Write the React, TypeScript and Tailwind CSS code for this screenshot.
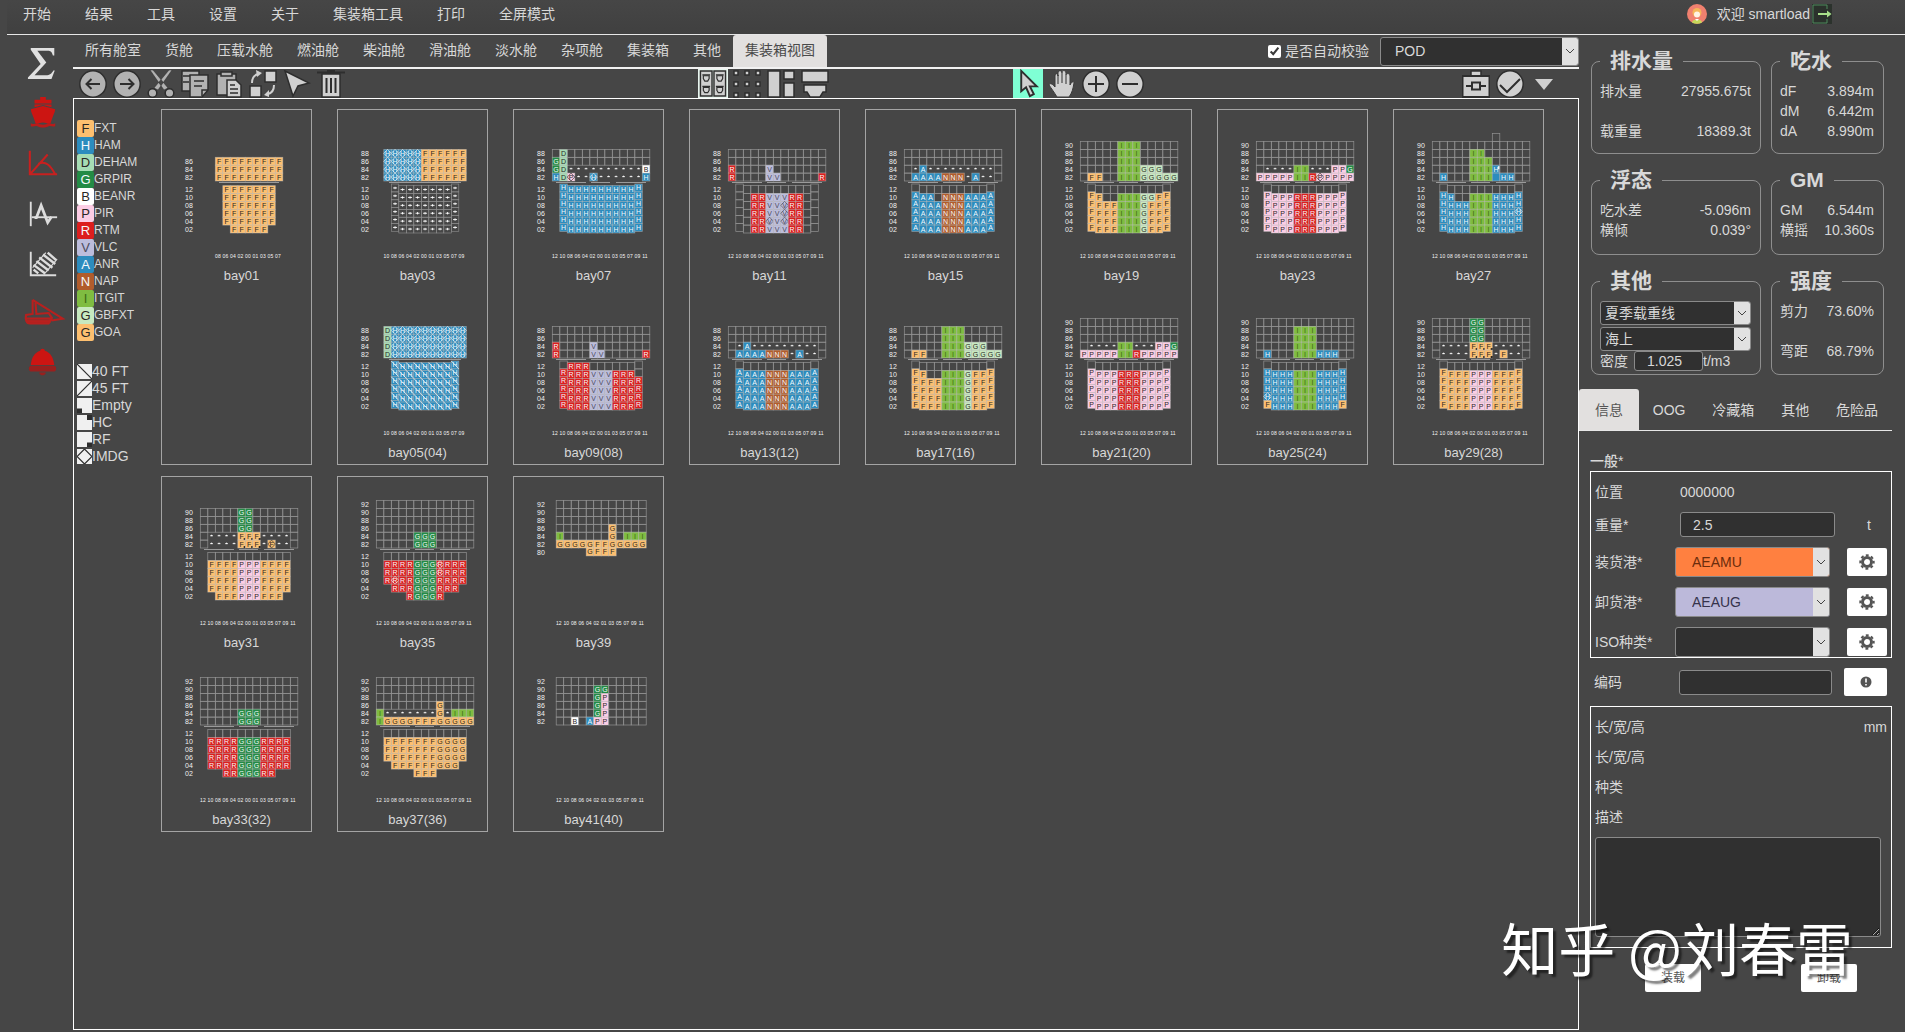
import { useState } from 'react'
import type { ReactNode } from 'react'
import clsx from 'clsx'

type Tone = { bg: string; fg: string; letter: string }

const DARK = '#2a2724'
const LIGHT = '#f4f8fb'

const TONES: Record<string, Tone> = {
  F: { bg: '#fdbf6f', fg: DARK, letter: 'F' },
  O: { bg: '#fdbf6f', fg: DARK, letter: 'G' },
  H: { bg: '#2c8cbe', fg: LIGHT, letter: 'H' },
  A: { bg: '#2c8cbe', fg: LIGHT, letter: 'A' },
  D: { bg: '#a6dcb4', fg: DARK, letter: 'D' },
  G: { bg: '#238b45', fg: LIGHT, letter: 'G' },
  B: { bg: '#ffffff', fg: DARK, letter: 'B' },
  P: { bg: '#fccde5', fg: DARK, letter: 'P' },
  R: { bg: '#dc1e1e', fg: LIGHT, letter: 'R' },
  V: { bg: '#bcbddc', fg: '#4c4c5c', letter: 'V' },
  N: { bg: '#b15c2c', fg: LIGHT, letter: 'N' },
  I: { bg: '#7fbc41', fg: '#3c6a14', letter: 'I' },
  L: { bg: '#c7e9c0', fg: DARK, letter: 'G' },
}

const PORTS = [
  ['F', 'FXT'],
  ['H', 'HAM'],
  ['D', 'DEHAM'],
  ['G', 'GRPIR'],
  ['B', 'BEANR'],
  ['P', 'PIR'],
  ['R', 'RTM'],
  ['V', 'VLC'],
  ['A', 'ANR'],
  ['N', 'NAP'],
  ['I', 'ITGIT'],
  ['L', 'GBFXT'],
  ['O', 'GOA'],
]

// One character per slot. Capital: port, lower case: dangerous goods,
// K: 40 ft, Q: reefer, E: high cube, X: plain block, +/-: taken by a 40 ft
// box of the next bay, .: free slot, space: no slot.
type BayPlan = {
  name: string
  deck: string[]
  hold?: string[]
  wings?: [number, number]
  from?: number
  to?: number
  short?: boolean
  below?: number
}

const E13 = '.............'
const E12 = '............'
const HOLD_TOP = ' ........... '

const times = (n: number, row: string) => Array<string>(n).fill(row)

const CARDS: BayPlan[][] = [
  [
    {
      name: 'bay01',
      deck: times(3, '  FFFFFFFFF  '),
      hold: [...times(5, '   FFFFFFF   '), '    FFFFF    '],
      from: 2,
      to: 10,
    },
  ],
  [
    { name: 'bay03', deck: times(4, ' hhhhhFFFFFF '), hold: times(6, '  +++++++++  '), wings: [2, 10], from: 1, to: 11 },
    { name: 'bay05(04)', deck: times(4, ' Dhhhhhhhhhh '), hold: times(6, '  KKKKKKKKK  '), wings: [2, 10], from: 1, to: 11 },
  ],
  [
    {
      name: 'bay07',
      deck: ['.D...........', 'GD...........', 'GD----------B', 'HDp--h------H'],
      hold: times(6, ' HHHHHHHHHHH '),
      wings: [1, 11],
    },
    {
      name: 'bay09(08)',
      deck: [E13, E13, 'R....V.......', 'R....VV.....R'],
      hold: [' .RRR....... ', ' RRRRVVVRRR. ', ...times(4, ' RRRRVVVRRRR ')],
      wings: [1, 11],
    },
  ],
  [
    {
      name: 'bay11',
      deck: [E13, E13, 'R....V.......', 'R....VV.....R'],
      hold: [HOLD_TOP, ' ..RRVVVRR.. ', ' ..RRVVvRR.. ', ' ..RRVVvRR.. ', ' ..RRvVvRR.. ', ' ..RRVVVRR.. '],
      wings: [1, 11],
    },
    {
      name: 'bay13(12)',
      deck: [E13, E13, '.-A---------.', '.AAAANNN-A--.'],
      hold: [HOLD_TOP, ...times(5, ' AAAANNNAAAA ')],
      wings: [1, 11],
    },
  ],
  [
    {
      name: 'bay15',
      deck: [E13, E13, '.-A---------.', '.AAAANNN-A--.'],
      hold: [HOLD_TOP, ' AAA.NNNAAAA ', ...times(4, ' AAAANNNAAAA ')],
      wings: [1, 11],
    },
    {
      name: 'bay17(16)',
      deck: ['.....III.....', '.....III.....', '.....IIILLL..', '.FF..IIILLLLL'],
      hold: [HOLD_TOP, ' FF..IIILFFF ', ...times(4, ' FFFFIIILFFF ')],
      wings: [1, 11],
    },
  ],
  [
    {
      name: 'bay19',
      deck: [...times(3, '.....III.....'), '.....IIILLL..', '.FF..IIILLLLL'],
      hold: [HOLD_TOP, ' FF..IIILLFF ', ...times(4, ' FFFFIIILFFF ')],
      wings: [1, 11],
    },
    {
      name: 'bay21(20)',
      deck: [E13, E13, E13, '.----II---PPG', 'PPPPPIIRPPPPP'],
      hold: [HOLD_TOP, ...times(5, ' PPPPRRRPPPP ')],
      wings: [1, 11],
    },
  ],
  [
    {
      name: 'bay23',
      deck: [E13, E13, E13, '.----II---PPG', 'PPPPPIIRpPPPP'],
      hold: [HOLD_TOP, ...times(5, ' PPPPRRRPPPP ')],
      wings: [1, 11],
    },
    {
      name: 'bay25(24)',
      deck: [E13, ...times(3, '.....III.....'), '.H...IIIHHH..'],
      hold: [HOLD_TOP, ...times(3, ' HHHHIIIHHHH '), ' hHHHIIIHHHH ', ' FHHHIIIHHHF '],
      wings: [1, 11],
    },
  ],
  [
    {
      name: 'bay27',
      deck: ['        .    ', E13, '.....II......', '.....III.....', '.....IIIE....', '.H...IIIXHH..'],
      hold: [HOLD_TOP, ' HH..IIIHHHH ', ' HHHHIIIHHHH ', ' HHHHIIIHHHh ', ...times(2, ' HHHHIIIHHHH ')],
      wings: [1, 11],
    },
    {
      name: 'bay29(28)',
      deck: [...times(3, '.....GG......'), '.----QQQ----.', '.----QQQ-F--.'],
      hold: [HOLD_TOP, ...times(5, ' FFFFPPPFFFF ')],
      wings: [1, 11],
    },
  ],
  [
    {
      name: 'bay31',
      deck: [...times(3, '.....GG......'), '.----QQQ----.', '.----QQQ-f--.'],
      hold: [HOLD_TOP, ...times(4, ' FFFFPPPFFFF '), '  FFFPPPFFF  '],
    },
    {
      name: 'bay33(32)',
      deck: [...times(4, E13), ...times(2, '.....GGG.....')],
      hold: [HOLD_TOP, ...times(4, ' RRRRGGGRRRR '), '   RRGGGRR   '],
    },
  ],
  [
    {
      name: 'bay35',
      deck: [...times(4, E13), ...times(2, '.....GGG.....')],
      hold: [HOLD_TOP, ...times(2, ' RRRRGGGrRRR '), ' RrRRGGGRRRR ', '  RRRGGGRRR  ', '    RGGGR    '],
    },
    {
      name: 'bay37(36)',
      deck: [E13, E13, E13, '........O....', 'I-------O-III', 'IOOOOFFFOOOOO'],
      hold: [HOLD_TOP, ...times(3, ' FFFFFFFOOOO '), '  FFFFFFOOO  ', '     FFF     '],
    },
  ],
  [
    {
      name: 'bay39',
      deck: [E12, E12, E12, '.......O....', 'I......O.III', 'OOOOOFFOOOOO', '    OFFF    '],
      short: true,
      below: 1,
    },
    {
      name: 'bay41(40)',
      deck: [E12, '.....GG.....', ...times(3, '.....GP.....'), '..B.APP.....'],
      short: true,
    },
  ],
]

const COLS = ['12', '10', '08', '06', '04', '02', '00', '01', '03', '05', '07', '09', '11']
const CW = 7.5
const CH = 7.9
const DECK_BOTTOM = 72
const HOLD_Y = 76.6

function Slot({ code, x, y }: { code: string; x: number; y: number }) {
  if (code === ' ') return null
  if (code === '.') return <rect x={x} y={y} width={CW} height={CH} fill="none" stroke="#929292" strokeWidth={0.7} />
  if (code === '+' || code === '-') {
    const cx = x + CW / 2
    const cy = y + CH / 2
    return (
      <g>
        {code === '+' && <rect x={x} y={y} width={CW} height={CH} fill="none" stroke="#8e8e8e" strokeWidth={0.6} />}
        <path
          d={code === '+' ? `M${cx - 2} ${cy}h4M${cx} ${cy - 1.2}v2.4` : `M${cx - 1.4} ${cy - 0.4}h2.8M${cx} ${cy - 1.4}v1.4`}
          stroke="#fff"
          strokeWidth={0.9}
        />
      </g>
    )
  }
  const danger = code !== code.toUpperCase()
  const key = danger ? code.toUpperCase() : ({ K: 'H', Q: 'F', E: 'H', X: 'H' }[code] ?? code)
  const tone = TONES[key]
  return (
    <g>
      <rect x={x} y={y} width={CW} height={CH} fill={tone.bg} />
      <rect x={x} y={y} width={CW} height={CH} fill="none" stroke="#c8c8c8" strokeOpacity={0.5} strokeWidth={0.8} />
      {danger && (
        <path
          d={`M${x + CW / 2} ${y}L${x + CW} ${y + CH / 2}L${x + CW / 2} ${y + CH}L${x} ${y + CH / 2}Z`}
          fill="none"
          stroke={tone.fg}
          strokeOpacity={0.8}
          strokeWidth={0.8}
        />
      )}
      {code === 'K' && <path d={`M${x} ${y}L${x + CW} ${y + CH}`} stroke={LIGHT} strokeWidth={0.8} />}
      {code === 'Q' && <rect x={x + CW - 1.6} y={y + CH - 2} width={2} height={2} fill={DARK} />}
      {code === 'E' && <rect x={x + CW - 2} y={y + 1} width={2} height={3} fill={LIGHT} />}
      {code !== 'X' && (
        <text x={x + CW / 2} y={y + 6.4} fontSize={7} textAnchor="middle" fill={tone.fg}>
          {tone.letter}
        </text>
      )}
    </g>
  )
}

function BayView({ plan }: { plan: BayPlan }) {
  const { deck, hold = [], wings, from = 0, to = 12, short, below = 0 } = plan
  const left = short ? 43.2 : 39.3
  const deckTop = DECK_BOTTOM - (deck.length - below) * CH
  const cols = short ? COLS.filter((c) => c !== '00') : COLS.slice(from, to + 1)
  const labelStart = short ? left : left + from * CW

  let hatches: number[][] = []
  if (hold.length) {
    if (from === 2) hatches = [[58, 118]]
    else if (from === 1) hatches = [[52, 124]]
    else hatches = [[43, 73], [78, 97], [103, 133]]
  }

  return (
    <div>
      <svg viewBox="1 1 149 156" className="block h-[156px] w-full font-['Liberation_Sans',sans-serif]" role="img" aria-label={plan.name}>
        {deck.map((row, r) => (
          <g key={r}>
            {row.trim().length > 1 && (
              <text x={24} y={deckTop + r * CH + 6.6} fontSize={7} fill="#f0f0f0">
                {82 + 2 * (deck.length - below - 1 - r)}
              </text>
            )}
            {[...row].map((code, c) => (
              <Slot key={c} code={code} x={left + c * CW} y={deckTop + r * CH} />
            ))}
          </g>
        ))}
        {hatches.map(([a, b]) => (
          <path key={a} d={`M${a} 73.5H${b}`} stroke="#9a9a9a" />
        ))}
        {hold.map((row, r) => (
          <g key={r}>
            <text x={24} y={HOLD_Y + r * CH + 6.6} fontSize={7} fill="#f0f0f0">
              {String(12 - 2 * r).padStart(2, '0')}
            </text>
            {[...row].map((code, c) => (
              <Slot key={c} code={code} x={left + c * CW} y={HOLD_Y + r * CH - (wings?.includes(c) ? 1.6 : 0)} />
            ))}
          </g>
        ))}
        {cols.map((c, i) => (
          <text key={c} x={labelStart + i * CW + 2.6} y={148.6} fontSize={5} textAnchor="middle" fill="#f6f6f6">
            {c}
          </text>
        ))}
      </svg>
      <p className="h-[21px] pl-2.5 text-center text-[13px] leading-5">{plan.name}</p>
    </div>
  )
}

const FILL = '#d0d0d0'
const MUTED = '#b2b2b2'
const EDGE = '#2e2e2e'

function ToolIcon({ children, fill = FILL }: { children: ReactNode; fill?: string }) {
  return (
    <svg viewBox="0 0 28 28" className="size-7" fill={fill} stroke={EDGE} strokeWidth={1.5} aria-hidden="true">
      {children}
    </svg>
  )
}

const HULL = 'M0 0h6v3l-1.500 2.500h-3L0 3Z'

const EDIT_TOOLS = [
  {
    label: '后退',
    icon: (
      <ToolIcon fill={MUTED}>
        <circle cx={14} cy={14} r={13.200} />
        <path d="M21 14H8M12.500 9 7.500 14l5 5" fill="none" strokeWidth={2} />
      </ToolIcon>
    ),
  },
  {
    label: '前进',
    icon: (
      <ToolIcon fill={MUTED}>
        <circle cx={14} cy={14} r={13.200} />
        <path d="M7 14h13M15.500 9l5 5-5 5" fill="none" strokeWidth={2} />
      </ToolIcon>
    ),
  },
  {
    label: '剪切',
    icon: (
      <ToolIcon fill={MUTED}>
        <path d="M3 0 17 20l4-2L6 0ZM25 0 11 20l-4-2L22 0Z" strokeWidth={0.5} />
        <circle cx={5.500} cy={23} r={4.300} />
        <circle cx={22.500} cy={23} r={4.300} />
      </ToolIcon>
    ),
  },
  {
    label: '复制',
    icon: (
      <ToolIcon fill={MUTED}>
        <path d="M1 1h17v20H1Z" />
        <path d="M2 6h8M2 12h6" />
        <path d="M9 5h18v15l-6 7H9Z" />
        <path d="M27 20h-6v6M13 11h10M13 16h8" fill="none" />
      </ToolIcon>
    ),
  },
  {
    label: '粘贴',
    icon: (
      <ToolIcon fill={MUTED}>
        <path d="M2 4h19v21H2Z" />
        <path d="M6 2h11v4H6Z" />
        <path d="M12 10h9l5 5v12H12Z" fill="#cfcfcf" />
        <path d="M15 15h5M15 19h8M15 23h8" />
      </ToolIcon>
    ),
  },
  {
    label: '交换',
    icon: (
      <ToolIcon>
        <path d="M16 1h11v11H16ZM1 16h11v11H1Z" />
        <path d="M3 13C3 8 5 5 9 4M25 15c0 5-2 8-6 9" fill="none" stroke={FILL} strokeWidth={2} />
        <path d="M7 0l6 3-5 4ZM20 20v7l-5-2Z" stroke="none" />
      </ToolIcon>
    ),
  },
  {
    label: '选择',
    icon: (
      <ToolIcon>
        <path d="M2 1 26 13 15 16 10 26Z" />
      </ToolIcon>
    ),
  },
  {
    label: '删除',
    icon: (
      <ToolIcon>
        <path d="M0 2.500h28M10 1h8" fill="none" strokeWidth={2} />
        <path d="M5 4h18v23H5Z" />
        <path d="M9.500 8v15M14 8v15M18.500 8v15" strokeWidth={2} />
      </ToolIcon>
    ),
  },
]

const VIEW_TOOLS = [
  {
    label: '全部贝位',
    icon: (
      <svg viewBox="0 0 30 30" className="h-[29px] w-[30px] bg-[#e8f5ef]" fill={FILL} stroke={EDGE} strokeWidth={1.5} aria-hidden="true">
        <path d="M2 2h12v26H2ZM16 2h12v26H16Z" />
        {[[5, 7], [5, 19], [19, 7], [19, 19]].map(([x, y]) => (
          <path key={`${x}-${y}`} d={HULL} transform={`translate(${x} ${y})`} strokeWidth={1.2} />
        ))}
        <path d="M4 6h8M4 18h8M18 6h8M18 18h8" strokeWidth={1.2} />
      </svg>
    ),
  },
  {
    label: '网格',
    icon: (
      <ToolIcon>
        {[1, 12, 23].flatMap((x) => [0, 11, 22].map((y) => <rect key={`${x}-${y}`} x={x} y={y + 1} width={4} height={4} strokeWidth={1.5} />))}
      </ToolIcon>
    ),
  },
  {
    label: '分栏',
    icon: (
      <ToolIcon>
        <path d="M1 1h12v26H1ZM17 1h10v8H17ZM17 13h10v14H17Z" />
      </ToolIcon>
    ),
  },
  {
    label: '单贝',
    icon: (
      <ToolIcon>
        <path d="M1 1h26v11H1ZM3 15h22v7h-3l-3 5H9l-3-5H3Z" />
      </ToolIcon>
    ),
  },
]

const MOUSE_TOOLS = [
  {
    label: '指针',
    icon: (
      <svg viewBox="0 0 30 30" className="h-[29px] w-[30px] bg-[#7fffd4]" fill={FILL} stroke={EDGE} strokeWidth={2} aria-hidden="true">
        <path d="M8 2v21l5-4 4 9 4-2-4-8h7Z" />
      </svg>
    ),
  },
  {
    label: '拖动',
    icon: (
      <ToolIcon>
        <path d="M9 27C6 22 3 18 1 15c0-2 3-2 6 2V6c0-3 3-3 3 0V3c0-3 4-3 4 0V2c0-2 4-2 4 1v2c0-2 4-2 4 1v9c2-4 4-4 4-2-1 6-2 10-5 14Z" stroke="#3a3a3a" strokeWidth={1} />
        <path d="M10 5v9M14 3v10M18 5v9" strokeWidth={1} />
      </ToolIcon>
    ),
  },
  {
    label: '放大',
    icon: (
      <ToolIcon>
        <circle cx={14} cy={14} r={13.200} />
        <path d="M6 14h16M14 6v16" strokeWidth={2} />
      </ToolIcon>
    ),
  },
  {
    label: '缩小',
    icon: (
      <ToolIcon>
        <circle cx={14} cy={14} r={13.200} />
        <path d="M6 14h16" strokeWidth={2} />
      </ToolIcon>
    ),
  },
]

const CHECK_TOOLS = [
  {
    label: '工具箱',
    icon: (
      <ToolIcon>
        <path d="M9 1h10v5H9Z" />
        <path d="M0.500 6h27v21h-27Z" strokeWidth={2} />
        <path d="M4 16h20" strokeWidth={2} />
        <path d="M10 12.500h8v7h-8Z" strokeWidth={2} />
      </ToolIcon>
    ),
  },
  {
    label: '校验',
    icon: (
      <ToolIcon>
        <circle cx={14} cy={14} r={13.200} />
        <path d="m4 15 7 7L24 9" fill="none" strokeWidth={2} />
      </ToolIcon>
    ),
  },
  {
    label: '更多',
    icon: (
      <ToolIcon>
        <path d="M5 9h18l-9 11Z" stroke="none" />
      </ToolIcon>
    ),
  },
]

function ToolGroup({ tools, className }: { tools: typeof EDIT_TOOLS; className?: string }) {
  return (
    <div className={clsx('flex items-center', className)}>
      {tools.map((tool) => (
        <button key={tool.label} type="button" aria-label={tool.label} className="flex w-[34px] justify-center">
          {tool.icon}
        </button>
      ))}
    </div>
  )
}

const SIDE_LINKS = [
  {
    label: '汇总',
    icon: (
      <path
        d="M4 1h25v8h-1.500C26.500 5 25 4 22 4H11l9.500 12.500L8 30h12c4.500 0 6-1.500 8-5h1.500L26 34H1v-1.500L14.500 18 4 3Z"
        fill="#e0e0e0"
      />
    ),
  },
  {
    label: '船舶',
    icon: (
      <g fill="#cc1512">
        <path d="M14 0h6v3h6v4H8V3h6ZM8 8h18v3l-9-2.500L8 11Z" />
        <path d="m4 13 13-3.500L30 13c-.5 4-2 6-3 9l-2 6c-2 1.500-4-1-8-1s-6 2.500-8 1l-2-6c-1-3-2.500-5-3-9Z" />
        <path d="M4 28c3 2 5-1 7 0 3 2 9 2 12 0 2-1 4 2 7 0v3c-3 1-5-1-7 0-3 2-9 2-12 0-2-1-4 1-7 0Z" fill="#b81c1a" />
      </g>
    ),
  },
  {
    label: '稳性',
    icon: <path d="M3 4v25h29M4 28 22 8M12 18c8-4 13 2 18 11" stroke="#c8201f" strokeWidth={2.200} fill="none" />,
  },
  {
    label: '强度曲线',
    icon: (
      <g fill="none" stroke="#dcdcdc">
        <path d="M4 5v26" strokeWidth={2} />
        <path d="M8 22h2l5-13 7 18 4-6" strokeWidth={3} />
        <path d="M5 21.500h27" strokeWidth={2} />
      </g>
    ),
  },
  {
    label: '面积图',
    icon: (
      <g fill="none" stroke="#dcdcdc">
        <path d="M4 5v25h27" strokeWidth={2} />
        <path d="m7 24 5 4M7 19l12 9M10 15l13 10M13 11l14 11M17 8l13 10M22 6l9 8" strokeWidth={2.600} />
        <path d="M6 22 20 6M18 29 32 13" strokeWidth={1.200} />
      </g>
    ),
  },
  {
    label: '破舱',
    icon: (
      <g fill="none" stroke="#b8201e" strokeWidth={2.200}>
        <path d="M6 3v15l-7 1c-1 4 0 9 4 9h20l3-5H-1M6 3l32 20-12 2M9 6l1 12 13-1 4 6" />
        <path d="M0 26h25" strokeWidth={3} />
      </g>
    ),
  },
  {
    label: '警报',
    icon: (
      <g fill="#cc1512">
        <path d="M14 4c0-3 5-3 5 0 6 2 9 7 10 15H4c1-8 4-13 10-15Z" />
        <rect x={2} y={20} width={29} height={6} rx={3} fill="#99201e" />
        <path d="M13 27h7c0 4-7 4-7 0Z" fill="#99201e" />
      </g>
    ),
  },
]

const SIZE_MARKS = [
  ['40 FT', 'M0 0 15 15'],
  ['45 FT', 'M15 0 0 15'],
  ['Empty', 'M0 10.500h5V15H0Z'],
  ['HC', 'M10 0h5v5h-5Z'],
  ['RF', 'M10 10.500h5V15h-5Z'],
  ['IMDG', 'M7.500 0 15 7.500 7.500 15 0 7.500Z'],
]

function Legend() {
  return (
    <div className="w-[85px] shrink-0 pt-[21px] pl-[3px]">
      <ul className="text-xs leading-[17px]">
        {PORTS.map(([code, name]) => (
          <li key={name} className="flex">
            <span
              className="w-[17px] rounded-[2px] text-center text-[13px]"
              style={{ backgroundColor: TONES[code].bg, color: TONES[code].fg }}
            >
              {TONES[code].letter}
            </span>
            {name}
          </li>
        ))}
      </ul>
      <ul className="mt-[22px] text-sm leading-[17px]">
        {SIZE_MARKS.map(([name, d]) => (
          <li key={name} className="flex items-center">
            <svg viewBox="0 0 15 15" className="size-[15px] bg-[#f0f0f0]" aria-hidden="true">
              <path
                d={d}
                stroke={name.includes('FT') || name === 'IMDG' ? EDGE : 'none'}
                strokeWidth={1.200}
                fill={name === 'IMDG' ? 'none' : EDGE}
              />
            </svg>
            {name}
          </li>
        ))}
      </ul>
    </div>
  )
}

type DropdownProps = {
  label: string
  options: string[]
  className: string
  wrapClass?: string
  id?: string
}

function Dropdown({ label, options, className, wrapClass, id }: DropdownProps) {
  return (
    <div className={clsx('relative', wrapClass)}>
      <select
        id={id}
        aria-label={label}
        className={clsx('block w-full appearance-none rounded-[3px] border border-[#8a8a8a] text-sm', className)}
      >
        {options.map((o) => (
          <option key={o}>{o}</option>
        ))}
      </select>
      <span className="pointer-events-none absolute inset-y-px right-px flex w-4 items-center justify-center rounded-r-[2px] bg-[#e1e1e1]">
        <svg viewBox="0 0 10 6" className="h-1.5 w-2.5" fill="none" stroke="#444" aria-hidden="true">
          <path d="m1 1 4 4 4-4" />
        </svg>
      </span>
    </div>
  )
}

function Group({ title, children }: { title: string; children: ReactNode }) {
  return (
    <fieldset className="rounded-lg border border-[#8e8e8e] pr-[9px] pl-2">
      <legend className="px-2.5 text-[21px] leading-7 font-bold">{title}</legend>
      {children}
    </fieldset>
  )
}

function Readings({ rows, className }: { rows: string[][]; className?: string }) {
  return (
    <dl className={clsx('flex flex-col leading-5', className)}>
      {rows.map(([name, value]) => (
        <div key={name} className="flex justify-between whitespace-nowrap">
          <dt>{name}</dt>
          <dd>{value}</dd>
        </div>
      ))}
    </dl>
  )
}

function Summary() {
  return (
    <section className="grid grid-cols-[170px_113px] gap-x-2.5 gap-y-3 pt-3 pl-3">
      <Group title="排水量">
        <Readings className="gap-5 pt-1.5 pb-3" rows={[['排水量', '27955.675t'], ['载重量', '18389.3t']]} />
      </Group>
      <Group title="吃水">
        <Readings className="pt-1.5" rows={[['dF', '3.894m'], ['dM', '6.442m'], ['dA', '8.990m']]} />
      </Group>
      <Group title="浮态">
        <Readings className="pt-1.5 pb-3.5" rows={[['吃水差', '-5.096m'], ['横倾', '0.039°']]} />
      </Group>
      <Group title="GM">
        <Readings className="pt-1.5 pb-3.5" rows={[['GM', '6.544m'], ['横摇', '10.360s']]} />
      </Group>
      <Group title="其他">
        <div className="flex flex-col gap-0.5 pt-1.5">
          <Dropdown label="载重线" options={['夏季载重线']} className="h-6 bg-[#303030] pl-1" />
          <Dropdown label="水域" options={['海上']} className="h-6 bg-[#303030] pl-1" />
        </div>
        <div className="flex items-center pb-[3px]">
          <label htmlFor="density" className="mr-1.5">
            密度
          </label>
          <input
            id="density"
            defaultValue="1.025"
            className="h-5 w-[69px] rounded-[3px] border border-[#8a8a8a] bg-[#303030] pl-3 text-sm"
          />
          t/m3
        </div>
      </Group>
      <Group title="强度">
        <Readings className="gap-5 pt-1.5" rows={[['剪力', '73.60%'], ['弯距', '68.79%']]} />
      </Group>
    </section>
  )
}

function GearButton({ label }: { label: string }) {
  return (
    <button type="button" aria-label={label} className="flex h-7 w-10 items-center justify-center rounded-[2px] bg-white">
      <svg viewBox="0 0 16 16" className="size-4" aria-hidden="true">
        <circle cx={8} cy={8} r={4.500} fill="none" stroke="#555" strokeWidth={3} />
        <circle cx={8} cy={8} r={6.700} fill="none" stroke="#555" strokeWidth={2} strokeDasharray="2.900 2.360" strokeDashoffset={1.400} />
      </svg>
    </button>
  )
}

const PORT_FIELDS = [
  { id: 'pol', label: '装货港*', options: ['AEAMU'], tone: 'bg-[#ff8040] text-[#6b2c0c]' },
  { id: 'pod', label: '卸货港*', options: ['AEAUG'], tone: 'bg-[#bcb9da] text-[#36334c]' },
  { id: 'iso', label: 'ISO种类*', options: [''], tone: 'bg-[#303030]' },
]

function DetailTabs() {
  const [active, setActive] = useState('信息')
  return (
    <div className="mt-3.5 mr-[13px] flex justify-between border-b border-[#e6e6e6] pr-px">
      {['信息', 'OOG', '冷藏箱', '其他', '危险品'].map((tab) => (
        <button
          key={tab}
          type="button"
          onClick={() => setActive(tab)}
          className={clsx('h-[41px] rounded-t-[3px]', tab === active ? 'bg-[#e2e0df] px-4 text-[#555]' : 'px-[13px]')}
        >
          {tab}
        </button>
      ))}
    </div>
  )
}

function ContainerForm() {
  return (
    <form className="flex flex-col pt-5 pr-[13px] pl-[11px]">
      <h2 className="leading-5 font-medium">一般*</h2>
      <div className="border border-white pt-2.5 pr-1 pl-1">
        <div className="flex h-5 items-center">
          <span className="w-[85px]">位置</span>
          <span>0000000</span>
        </div>
        <div className="mt-2.5 flex items-center">
          <label htmlFor="weight" className="w-[85px]">
            重量*
          </label>
          <input
            id="weight"
            defaultValue="2.5"
            className="h-[25px] w-[155px] rounded-[3px] border border-[#8a8a8a] bg-[#303030] pl-3 text-sm"
          />
          <span className="ml-8">t</span>
        </div>
        <div className="mt-2.5 flex flex-col gap-2.5">
          {PORT_FIELDS.map(({ id, label, options, tone }) => (
            <div key={id} className="flex h-[30px] items-center">
              <label htmlFor={id} className="w-20">
                {label}
              </label>
              <Dropdown id={id} label={label} options={options} wrapClass="w-[155px]" className={clsx('h-[30px] pl-4', tone)} />
              <div className="ml-auto">
                <GearButton label={`${label}设置`} />
              </div>
            </div>
          ))}
        </div>
      </div>
      <div className="mt-2.5 flex h-7 items-center pr-[5px] pl-1">
        <label htmlFor="code" className="w-[85px]">
          编码
        </label>
        <input id="code" className="h-[25px] w-[153px] rounded-[3px] border border-[#8a8a8a] bg-[#303030] pl-3 text-sm" />
        <button type="button" aria-label="编码说明" className="ml-auto flex h-7 w-[43px] items-center justify-center rounded-[2px] bg-white">
          <svg viewBox="0 0 12 12" className="size-3" aria-hidden="true">
            <circle cx={6} cy={6} r={5.500} fill="#555" />
            <path d="M6 2.500v4M6 8v1.500" stroke="#fff" strokeWidth={1.600} />
          </svg>
        </button>
      </div>
      <div className="mt-2.5 border border-white pt-2.5 pr-1 pl-1">
        <div className="flex flex-col gap-2.5 leading-5">
          <div className="flex justify-between">
            <span>长/宽/高</span>
            <span>mm</span>
          </div>
          <span>长/宽/高</span>
          <span>种类</span>
          <label htmlFor="remark">描述</label>
        </div>
        <textarea
          id="remark"
          className="mt-2.5 mb-2.5 block h-[100px] w-[286px] rounded-[3px] border border-[#8a8a8a] bg-[#303030] p-1"
        />
      </div>
      <div className="mt-4 flex justify-between pr-[35px] pl-[55px] text-xs text-[#555]">
        <button type="button" className="h-7 w-14 rounded-[2px] bg-white">
          装载
        </button>
        <button type="button" className="h-7 w-14 rounded-[2px] bg-white">
          卸载
        </button>
      </div>
    </form>
  )
}

const MENU = ['开始', '结果', '工具', '设置', '关于', '集装箱工具', '打印', '全屏模式']
const TANK_TABS = ['所有舱室', '货舱', '压载水舱', '燃油舱', '柴油舱', '滑油舱', '淡水舱', '杂项舱', '集装箱', '其他', '集装箱视图']

function TopBar() {
  return (
    <header className="ml-[7px] flex h-[35px] items-center border-b border-[#e6e6e6] bg-linear-to-b from-[#464646] to-[#404040] pb-1.5">
      <nav className="flex gap-[34px] pl-4">
        {MENU.map((item) => (
          <a key={item} href="#">
            {item}
          </a>
        ))}
      </nav>
      <div className="mr-[73px] ml-auto flex items-center">
        <svg viewBox="0 0 20 20" className="mr-2.5 size-5" aria-hidden="true">
          <circle cx={10} cy={10} r={10} fill="#f0806f" />
          <circle cx={10} cy={8.500} r={4.500} fill="#f6b65a" />
          <circle cx={10} cy={10.500} r={3} fill="#fff3e4" />
          <path d="M5 18.500c0-4 10-4 10 0-3 1.600-7 1.600-10 0Z" fill="#c6d85a" />
          <path d="m8 15 2 2 2-2Z" fill="#fff" />
        </svg>
        <span>欢迎 smartload</span>
        <button type="button" aria-label="退出" className="ml-0.5">
          <svg viewBox="0 0 20 20" className="block size-5" fill="none" aria-hidden="true">
            <path d="M0 0h20v20H0Z" fill="#2b322c" />
            <path d="M15 5V1H1v18h14v-4" stroke="#4f8a5c" />
            <path d="M6 9h9V6.500l4.500 3.500-4.500 3.500V11H6Z" fill="#a8e08a" />
          </svg>
        </button>
      </div>
    </header>
  )
}

export default function App() {
  const [tab, setTab] = useState('集装箱视图')

  return (
    <div className="relative flex min-h-screen flex-col bg-[#464646] font-['Liberation_Sans','Noto_Sans_CJK_SC',sans-serif] text-sm text-[#d8d8d8]">
      <TopBar />
      <div className="flex flex-1">
        <aside className="flex w-[73px] shrink-0 flex-col items-center gap-[18px] pt-3 pl-3">
          {SIDE_LINKS.map(({ label, icon }) => (
            <a key={label} href="#" aria-label={label}>
              <svg viewBox="0 0 34 34" className="block size-8 overflow-visible" aria-hidden="true">
                {icon}
              </svg>
            </a>
          ))}
        </aside>

        <main className="flex min-w-0 flex-1 flex-col pb-0.5">
          <div className="flex h-[34px] items-end border-b-2 border-[#f2f2f2]">
            <div className="flex h-8">
              {TANK_TABS.map((t) => (
                <button
                  key={t}
                  type="button"
                  onClick={() => setTab(t)}
                  className={clsx('rounded-t-[3px] px-3 pb-0.5', t === tab && 'bg-[#e2e0df] text-[#4a4a4a]')}
                >
                  {t}
                </button>
              ))}
            </div>
            <div className="ml-auto flex h-8 items-center">
              <label className="mr-[11px] flex items-center gap-1">
                <input type="checkbox" defaultChecked className="size-[13px] accent-white" />
                是否自动校验
              </label>
              <Dropdown label="显示方式" options={['POD']} wrapClass="w-[199px]" className="h-[29px] bg-[#303030] pl-3.5" />
            </div>
          </div>
          <div className="flex h-[29px] items-center pl-[3px]">
            <ToolGroup tools={EDIT_TOOLS} />
            <ToolGroup tools={VIEW_TOOLS} className="ml-[348px]" />
            <ToolGroup tools={MOUSE_TOOLS} className="ml-[179px]" />
            <ToolGroup tools={CHECK_TOOLS} className="mr-[18px] ml-auto" />
          </div>
          <div className="flex flex-1 border border-white">
            <Legend />
            <div className="flex flex-1 flex-wrap content-start gap-x-[25px] gap-y-[11px] pt-2.5 pl-0.5">
              {CARDS.map((bays) => (
                <section key={bays[0].name} className="w-[151px] border border-[#a4a4a4]">
                  {bays.map((plan) => (
                    <BayView key={plan.name} plan={plan} />
                  ))}
                </section>
              ))}
            </div>
          </div>
        </main>

        <aside className="w-[326px] shrink-0">
          <Summary />
          <DetailTabs />
          <ContainerForm />
        </aside>
      </div>
      <p className="pointer-events-none absolute right-[52px] bottom-[46px] font-['Noto_Sans_CJK_SC',sans-serif] text-[57px] leading-[80px] text-white text-shadow-[3px_3px_2px_rgb(0_0_0/0.5)]">
        知乎 @刘春雷
      </p>
    </div>
  )
}
